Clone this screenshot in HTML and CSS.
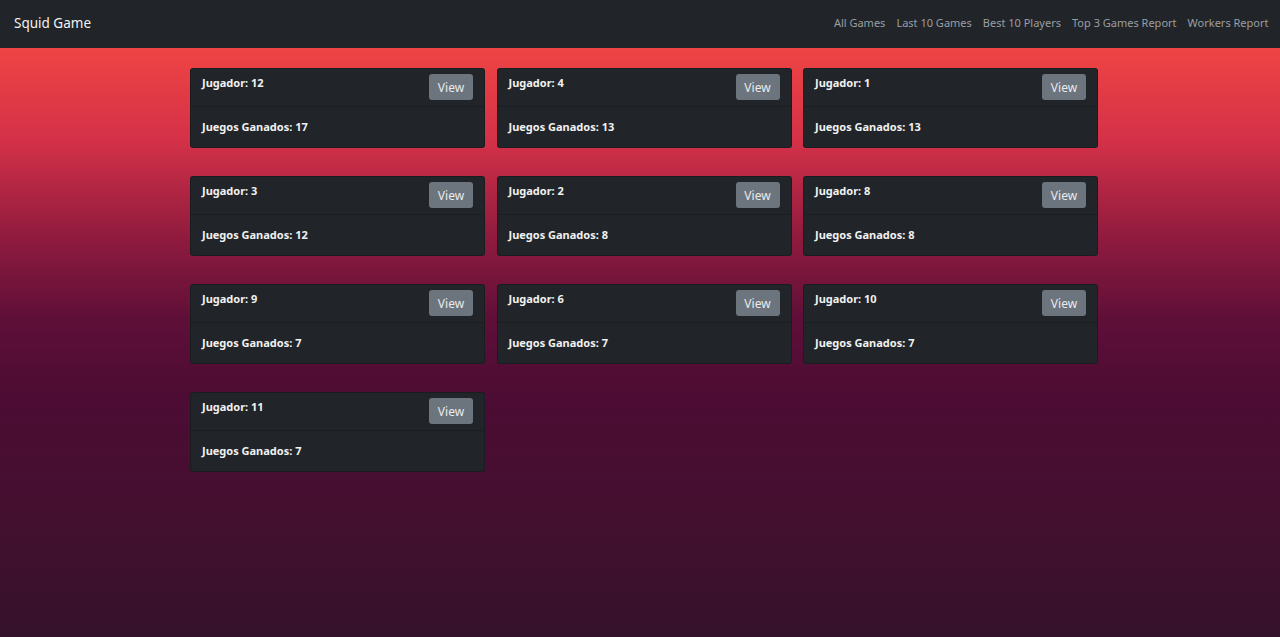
FILE: index.html
```html
<!DOCTYPE html>
<html lang="es">
<head>
<meta charset="utf-8">
<title>Squid Game</title>
<link rel="stylesheet" href="styles.css">
</head>
<body>
<nav class="navbar">
  <a class="brand" href="#">Squid Game</a>
  <ul class="nav-links">
    <li><a href="#">All Games</a></li>
    <li><a href="#">Last 10 Games</a></li>
    <li><a href="#">Best 10 Players</a></li>
    <li><a href="#">Top 3 Games Report</a></li>
    <li><a href="#">Workers Report</a></li>
  </ul>
</nav>
<main class="container">
  <div class="card"><div class="card-header"><span class="title">Jugador: 12</span><button class="btn">View</button></div><div class="card-body">Juegos Ganados: 17</div></div>
  <div class="card"><div class="card-header"><span class="title">Jugador: 4</span><button class="btn">View</button></div><div class="card-body">Juegos Ganados: 13</div></div>
  <div class="card"><div class="card-header"><span class="title">Jugador: 1</span><button class="btn">View</button></div><div class="card-body">Juegos Ganados: 13</div></div>
  <div class="card"><div class="card-header"><span class="title">Jugador: 3</span><button class="btn">View</button></div><div class="card-body">Juegos Ganados: 12</div></div>
  <div class="card"><div class="card-header"><span class="title">Jugador: 2</span><button class="btn">View</button></div><div class="card-body">Juegos Ganados: 8</div></div>
  <div class="card"><div class="card-header"><span class="title">Jugador: 8</span><button class="btn">View</button></div><div class="card-body">Juegos Ganados: 8</div></div>
  <div class="card"><div class="card-header"><span class="title">Jugador: 9</span><button class="btn">View</button></div><div class="card-body">Juegos Ganados: 7</div></div>
  <div class="card"><div class="card-header"><span class="title">Jugador: 6</span><button class="btn">View</button></div><div class="card-body">Juegos Ganados: 7</div></div>
  <div class="card"><div class="card-header"><span class="title">Jugador: 10</span><button class="btn">View</button></div><div class="card-body">Juegos Ganados: 7</div></div>
  <div class="card"><div class="card-header"><span class="title">Jugador: 11</span><button class="btn">View</button></div><div class="card-body">Juegos Ganados: 7</div></div>
</main>
</body>
</html>
```

FILE: styles.css
```css
* { box-sizing: border-box; }
html, body { margin: 0; padding: 0; }
body {
  min-height: 637px;
  font-family: "Noto Sans", "Open Sans", sans-serif;
  font-size: 11px;
  color: #f1f1f1;
  background: linear-gradient(to bottom,
    #212529 0px, #212529 48px,
    #ef4444 48px,
    #d43148 140px,
    #8e1a3e 240px,
    #5e0f38 320px,
    #4c0c33 400px,
    #441030 520px,
    #35122c 637px);
}
.navbar {
  height: 48px;
  display: flex;
  align-items: center;
  justify-content: space-between;
  padding: 0 6px 3px 14px;
  background: #212529;
}
.brand {
  color: #f2f2f2;
  text-decoration: none;
  font-size: 13.5px;
  padding-top: 1px;
}
.nav-links {
  display: flex;
  list-style: none;
  margin: 0;
  padding: 0;
}
.nav-links a {
  display: block;
  padding: 0 5.5px;
  color: #9b9ea2;
  text-decoration: none;
  font-size: 11px;
}
.container {
  width: 910px;
  margin: 20px 0 0 190px;
  display: grid;
  grid-template-columns: repeat(3, 295px);
  column-gap: 11.5px;
  row-gap: 28px;
}
.card {
  background: #212529;
  border: 1px solid rgba(0, 0, 0, 0.2);
  border-radius: 3px;
  font-weight: 700;
}
.card-header {
  height: 38px;
  display: flex;
  justify-content: space-between;
  align-items: flex-start;
  padding: 5px 11px 0 11px;
  border-bottom: 1px solid #1b1e21;
}
.title { line-height: 16px; padding-top: 1px; }
.btn {
  width: 44px;
  height: 26px;
  border: 0;
  border-radius: 3px;
  background: #6c757d;
  color: #e9eaeb;
  font-family: inherit;
  font-size: 12px;
  font-weight: 400;
  padding: 0;
}
.card-body {
  padding: 12px 11px;
  line-height: 16px;
}
```
